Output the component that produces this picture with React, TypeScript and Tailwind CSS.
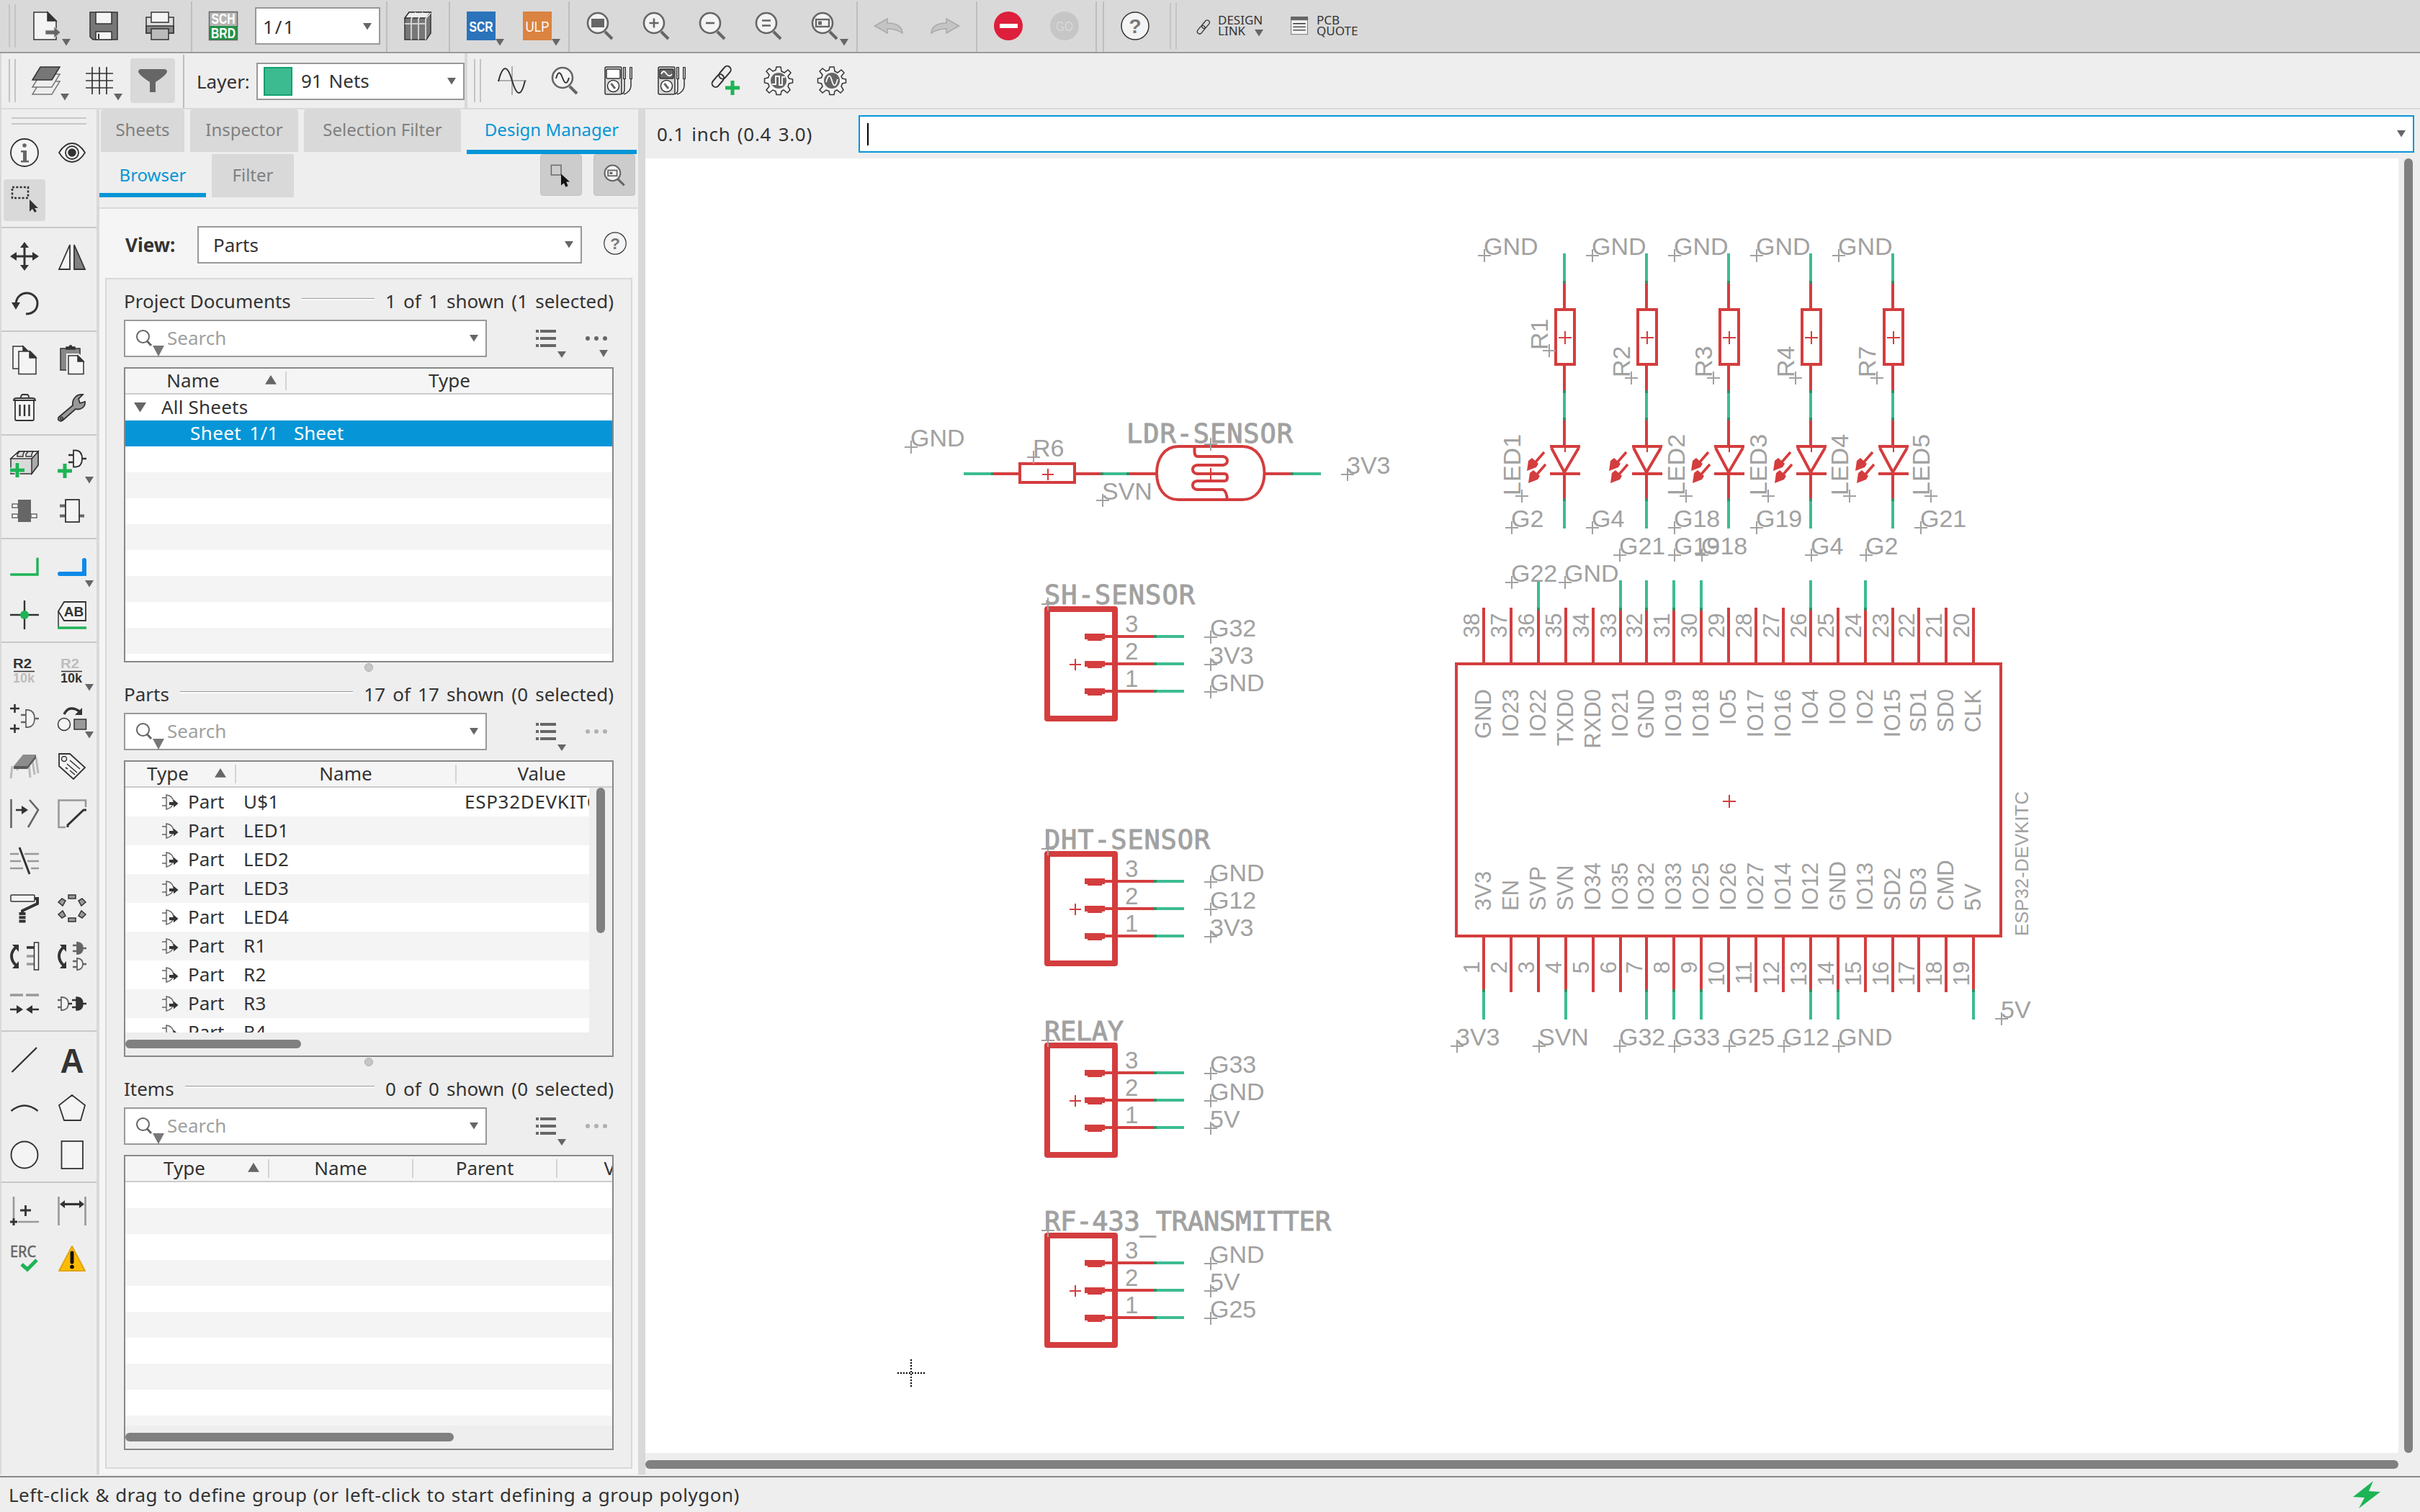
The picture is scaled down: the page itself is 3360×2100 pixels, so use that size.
import React, { ReactNode } from "react";

const DARK = "#333333";
const MID = "#666666";
const LIGHT = "#f4f4f4";
const GREEN = "#1db455";
const RED = "#d43d3e";
const NET = "#3dbc91";
const JOIN = "#338f66";
const GRAY = "#a1a1a1";

/* ---------- small building blocks ---------- */

function Tri({ className = "", size = 12, up = false }: { className?: string; size?: number; up?: boolean }) {
  return (
    <svg className={className} width={size} height={size * 0.8} viewBox="0 0 12 10" preserveAspectRatio="none">
      <path d={up ? "M0 10L6 0L12 10Z" : "M0 0H12L6 10Z"} fill={MID} />
    </svg>
  );
}

function Ico({ children, size = 40 }: { children: ReactNode; size?: number }) {
  return (
    <svg width={size} height={size} viewBox="0 0 40 40" fill="none" stroke={DARK} strokeWidth={1.5} className="shrink-0 overflow-visible">
      {children}
    </svg>
  );
}

function Handle({ className = "" }: { className?: string }) {
  return <div className={`w-[10px] border-x-2 border-[#c4c4c4] shrink-0 ${className}`} />;
}

function Sep({ className = "w-[10px]" }: { className?: string }) {
  return (
    <div className={`h-full flex justify-center shrink-0 pt-[2px] ${className}`}>
      <div className="w-[2px] h-full bg-[#bebebe]" />
    </div>
  );
}

function Cell({ children, menu }: { children: ReactNode; menu?: boolean }) {
  return (
    <div className="relative w-[78px] h-full flex items-center justify-center shrink-0">
      {children}
      {menu && <Tri className="absolute left-[59px] top-[54px]" />}
    </div>
  );
}

function Cell2({ children, menu, on }: { children: ReactNode; menu?: boolean; on?: boolean }) {
  return (
    <div className="relative w-[74px] h-full flex items-center justify-center shrink-0">
      <div className={`w-[62px] h-[62px] rounded-[4px] flex items-center justify-center ${on ? "bg-[#d9d9d9]" : ""}`}>{children}</div>
      {menu && <Tri className="absolute left-[57px] top-[56px]" />}
    </div>
  );
}

/* ---------- icons ---------- */

function Lens({ children }: { children?: ReactNode }) {
  return (
    <Ico>
      <path d="M26 28L36 38" stroke={MID} strokeWidth={4} />
      <circle cx={16} cy={16} r={14} fill={LIGHT} stroke={MID} strokeWidth={2.6} />
      {children}
    </Ico>
  );
}

const GEAR =
  "M17 1H23L24 7L28 9L33 5L37 9L33 14L34.500 17L39.500 18V23L34.500 24L33 28L36 33L32 37L27 33L24 34.500L23 39.500H17L16 34.500L12 33L7 37L3 33L7 28L5.500 24L0.500 23V17L5.500 16L7 12L3 7L7 3L12 7L16 5.500Z";

function Gear({ d }: { d: string }) {
  return (
    <Ico>
      <path d={GEAR} fill={LIGHT} />
      <circle cx={20} cy={20} r={11} fill={MID} stroke="none" />
      <path d={d} stroke="#fff" strokeWidth={1.8} />
    </Ico>
  );
}

function Meter({ dark }: { dark?: boolean }) {
  return (
    <Ico>
      <rect x={1} y={1} width={23} height={38} rx={2} fill="#d9d9d9" />
      <rect x={3} y={4} width={19} height={13} rx={1} fill={dark ? MID : "#fff"} />
      {dark && <path d="M5 11Q8 4 12 10T20 11" stroke="#fff" strokeWidth={1.8} />}
      <circle cx={12.500} cy={27.500} r={8} fill="#fff" />
      <path d="M9.500 24L15 31" strokeWidth={3} stroke={MID} />
      <path d="M28 18V32Q28 38 24 38.500M37 18V28Q36 36 27 39" strokeWidth={1.5} />
      <path d="M28 1V18M37 1V18" strokeWidth={4} />
      <path d="M28 2V17M37 2V17" strokeWidth={1.4} stroke="#ddd" />
    </Ico>
  );
}

function Chain({ plus }: { plus?: boolean }) {
  return (
    <>
      <g transform="rotate(-50 15 14)" strokeWidth={2}>
        <rect x={-3} y={9} width={20} height={10} rx={5} />
        <rect x={12} y={9} width={20} height={10} rx={5} />
      </g>
      {plus && <path d="M30 20V40M20 30H40" stroke={GREEN} strokeWidth={5} />}
    </>
  );
}

function Help({ size = 40 }: { size?: number }) {
  return (
    <Ico size={size}>
      <circle cx={20} cy={20} r={19} fill={LIGHT} />
      <text x={20} y={30} textAnchor="middle" fontSize={28} fontWeight={700} fontFamily="Liberation Sans, sans-serif" fill="#777" stroke="none">?</text>
    </Ico>
  );
}

function T({ x, y, s, children, fill = DARK, w = 700, anchor = "middle", len }: { x: number; y: number; s: number; children: ReactNode; fill?: string; w?: number; anchor?: "start" | "middle" | "end"; len?: number }) {
  return (
    <text x={x} y={y} fontSize={s} fontWeight={w} textAnchor={anchor} textLength={len} lengthAdjust="spacingAndGlyphs" fill={fill} stroke="none" fontFamily="Liberation Sans, sans-serif">
      {children}
    </text>
  );
}

function Undo({ flip }: { flip?: boolean }) {
  return (
    <Ico>
      <path transform={flip ? "translate(40 0) scale(-1 1)" : undefined} d="M0.500 20L18 10V16Q38 16 39 30Q30 24 18 24V30Z" fill="#c4c4c4" stroke="#a9a9a9" />
    </Ico>
  );
}

const ic: Record<string, ReactNode> = {
  info: (
    <Ico>
      <circle cx={20} cy={20} r={19} fill={LIGHT} strokeWidth={1.8} />
      <circle cx={20} cy={10} r={2.800} fill={MID} stroke="none" />
      <path d="M15 17H23V31H26V33.500H15V31H18V19.500H15Z" fill={MID} stroke="none" />
    </Ico>
  ),
  eye: (
    <Ico>
      <path d="M2 20Q10 7 20 7T38 20Q30 33 20 33T2 20Z" fill={LIGHT} strokeWidth={1.8} />
      <circle cx={20} cy={20} r={9} strokeWidth={1.800} />
      <circle cx={20} cy={20} r={5} fill={DARK} />
    </Ico>
  ),
  select: (
    <Ico>
      <rect x={3} y={2} width={22} height={15} strokeWidth={2.600} strokeDasharray="3 2.300" />
      <path d="M27 19V36L31 32L34 37L37 35.500L34 31H39Z" fill={DARK} stroke="none" />
    </Ico>
  ),
  move: (
    <Ico>
      <path d="M20 4V36M4 20H36" strokeWidth={3} />
      <path d="M20 0L26 8H14ZM20 40L26 32H14ZM0 20L9 14V26ZM40 20L31 14V26Z" fill={DARK} stroke="none" />
    </Ico>
  ),
  mirror: (
    <Ico>
      <path d="M17 4V38H2Z" fill={LIGHT} strokeWidth={1.8} />
      <path d="M23 4V38H38Z" fill="#808080" strokeWidth={1.8} />
    </Ico>
  ),
  rotate: (
    <Ico>
      <path d="M8 20C9 9 17 5 23 5C32 5 38 12 38 19C38 28 32 34 22 34" strokeWidth={3} />
      <path d="M2 18H14L8 28Z" fill={DARK} stroke="none" />
    </Ico>
  ),
  copy: (
    <Ico>
      <path d="M4 1H18L24 7V32H4Z" fill={LIGHT} />
      <path d="M18 1L24 7H18Z" fill={DARK} />
      <path d="M12 8H28L36 16V39.500H12Z" fill={LIGHT} />
      <path d="M27 8L36 17H27Z" fill={DARK} />
    </Ico>
  ),
  paste: (
    <Ico>
      <path d="M4 4H31V34H4Z" fill="#888" />
      <path d="M12 5V2H16L17 0H19L20 2H24V5Z" fill={DARK} />
      <path d="M14 13H29L37 21V39.500H14Z" fill={LIGHT} stroke="#eee" strokeWidth={4} />
      <path d="M15 14H28L36 22V39.500H15Z" fill={LIGHT} />
      <path d="M28 14L36 22H28Z" fill={DARK} />
    </Ico>
  ),
  trash: (
    <Ico>
      <path d="M7 11V36Q7 38 9 38H31Q33 38 33 36V11" fill={LIGHT} strokeWidth={1.800} />
      <path d="M5 10Q5 7 9 7H31Q35 7 35 10Z" fill={LIGHT} strokeWidth={1.800} />
      <path d="M15 6Q15 2 18 2H23Q26 2 26 6" strokeWidth={1.800} />
      <path d="M13.500 16V32M20 16V32M26.500 16V32" strokeWidth={2.400} />
    </Ico>
  ),
  wrench: (
    <Ico>
      <path d="M2 33L21 17C20 8 26 1 35 2L29 8L31 14L38 12C39 19 32 24 25 22L8 37C4 41 -2 37 2 33Z" fill="#999" strokeWidth={1.800} />
      <circle cx={5.500} cy={35} r={1.800} />
    </Ico>
  ),
  addpart: (
    <Ico>
      <path d="M1 13L12 3H39V22L30 34H1Z" fill="#d9d9d9" />
      <path d="M30 13L39 3V22L30 34Z" fill="#aaa" />
      <path d="M1 13L12 3H39L30 13Z" fill={LIGHT} />
      <path d="M10 7L13 3H20L18 7V10H10ZM22 7L25 3H32L30 7V10H22Z" fill="#ddd" />
      <path d="M10 18V40M0 29H20" stroke="#eee" strokeWidth={7} />
      <path d="M10 19V39M0 29H20" stroke={GREEN} strokeWidth={5} />
    </Ico>
  ),
  addgate: (
    <Ico>
      <path d="M15 8H22M15 18H22M33 13H40" strokeWidth={2.600} />
      <path d="M22 1.500H25Q34 2 34 13T25 24.500H22Z" fill={LIGHT} strokeWidth={1.800} />
      <path d="M10 20V40M0 30H20" stroke={GREEN} strokeWidth={5} />
    </Ico>
  ),
  chipdark: (
    <Ico>
      <path d="M3 10H11V15H3ZM3 24H11V29H3ZM29 24H37V29H29Z" stroke={MID} fill="#fff" />
      <rect x={11} y={4} width={18} height={31} fill={MID} stroke="none" />
    </Ico>
  ),
  chip: (
    <Ico>
      <path d="M3 12.500H11M3 26.500H11M29 26.500H37" stroke={MID} strokeWidth={4} />
      <rect x={11} y={4} width={19} height={31} fill={LIGHT} strokeWidth={1.800} />
    </Ico>
  ),
  net: (
    <Ico>
      <path d="M1.500 30H38V8" stroke={GREEN} strokeWidth={3.400} strokeLinecap="round" />
    </Ico>
  ),
  bus: (
    <Ico>
      <path d="M3 29H37V10" stroke="#0d8ae8" strokeWidth={6} strokeLinecap="round" />
    </Ico>
  ),
  junction: (
    <Ico>
      <path d="M20 0V40M0 20H40" strokeWidth={2.400} />
      <circle cx={20} cy={20} r={6} fill={GREEN} stroke="none" />
    </Ico>
  ),
  label: (
    <Ico>
      <path d="M1 15L9 2H39V28H9Z" fill={LIGHT} strokeWidth={1.800} />
      <path d="M1 15V38" />
      <path d="M0 38H40" stroke={GREEN} strokeWidth={3.400} />
      <T x={22.500} y={22} s={19}>AB</T>
    </Ico>
  ),
  r2a: (
    <Ico>
      <T x={4} y={16} s={18} anchor="start" len={26}>R2</T>
      <path d="M5 20.500H34" />
      <T x={4} y={36} s={18} anchor="start" len={30} fill="#bdbdbd">10k</T>
    </Ico>
  ),
  r2b: (
    <Ico>
      <T x={4} y={16} s={18} anchor="start" len={26} fill="#bdbdbd">R2</T>
      <path d="M5 20.500H34" />
      <T x={4} y={36} s={18} anchor="start" len={30}>10k</T>
    </Ico>
  ),
  invoke: (
    <Ico>
      <path d="M0 6H13M6.500 0V12M0 34H13M6.500 28V40" strokeWidth={2.600} />
      <path d="M15 15H22M15 25H22M33 20H40" stroke={MID} strokeWidth={2.600} />
      <path d="M22 8H25Q34 9 34 20T25 32H22Z" fill={LIGHT} stroke={MID} strokeWidth={1.800} />
    </Ico>
  ),
  replace: (
    <Ico>
      <circle cx={9} cy={28} r={8.500} fill={LIGHT} />
      <rect x={23} y={21} width={16.500} height={14} fill="#999" />
      <path d="M9 14Q13 6 19 6Q26 6 31 11" strokeWidth={3.500} />
      <path d="M34 5V15H24Z" fill={DARK} stroke="none" />
    </Ico>
  ),
  dip: (
    <Ico>
      <path d="M3 20L1 37M10 22V26M26 17L28 36M31 12L34 32M36 8L39 30" stroke="#bbb" strokeWidth={3} />
      <path d="M5 20L18 4H36L24 20Z" fill="#8c8c8c" stroke="none" />
      <path d="M5 20H24L36 4V9L24 24H5Z" fill="#5a5a5a" stroke="none" />
    </Ico>
  ),
  tag: (
    <Ico>
      <path d="M2 3H17L38 22L22 38L2 20Z" fill={LIGHT} strokeWidth={1.800} />
      <circle cx={9} cy={10} r={3.500} />
      <path d="M17 12L31 24M13 17L27 29M11 22L14 24M17 26L24 32" strokeWidth={1.600} />
    </Ico>
  ),
  split: (
    <Ico>
      <path d="M1.500 0V40M27 1L39 15L25 39" stroke={MID} strokeWidth={2.600} />
      <path d="M8 15H19" strokeWidth={2.600} />
      <path d="M16 9L25 15L16 21Z" fill={DARK} stroke="none" />
    </Ico>
  ),
  miter: (
    <Ico>
      <path d="M11 39H1.500V1.500H39V11" stroke="#999" strokeWidth={2.600} />
      <path d="M14 39V36L36 15H40" strokeWidth={3} />
    </Ico>
  ),
  cutlines: (
    <Ico>
      <path d="M0 10H12M0 20H15M0 30H18M20 10H40M24 20H40M29 30H40" stroke="#999" strokeWidth={2.600} />
      <path d="M13 1L27 38" strokeWidth={3} />
    </Ico>
  ),
  paint: (
    <Ico>
      <rect x={1} y={1} width={33} height={9} rx={1} fill={LIGHT} />
      <path d="M34 6H38V13L17 23V26" strokeWidth={4} />
      <path d="M17 25V40" strokeWidth={9} strokeDasharray="4 1.200" />
    </Ico>
  ),
  array: (
    <Ico>
      <g fill="#999">
        <rect x={15} y={1} width={10} height={5} />
        <rect x={15} y={33} width={10} height={5} />
        <path d="M1 11L6 6L11 9L7 16Z" />
        <path d="M39 11L34 6L29 9L33 16Z" />
        <path d="M1 28L6 33L11 30L7 23Z" />
        <path d="M39 28L34 33L29 30L33 23Z" />
      </g>
    </Ico>
  ),
  pinswap: (
    <Ico>
      <path d="M10 6Q2 12 2 20T10 34" strokeWidth={4} />
      <path d="M3 4H12V14ZM3 37H12V27Z" fill={DARK} stroke="none" />
      <path d="M23 8H33" strokeWidth={3.600} />
      <path d="M23 20H33M23 31H33" stroke="#999" strokeWidth={3.600} />
      <rect x={33.500} y={1} width={6} height={38} fill={LIGHT} />
    </Ico>
  ),
  gateswap: (
    <Ico>
      <path d="M10 6Q2 12 2 20T10 34" strokeWidth={4} />
      <path d="M3 4H12V14ZM3 37H12V27Z" fill={DARK} stroke="none" />
      <g stroke={MID} strokeWidth={1.800}>
        <path d="M21 5H27M21 13H27M34 9H40M21 27H27M21 35H27M34 31H40" strokeWidth={2.400} />
        <path d="M27 1H28Q35 2 35 9T28 17H27Z" fill={MID} />
        <path d="M27 23H28Q35 24 35 31T28 39H27Z" fill={LIGHT} />
      </g>
    </Ico>
  ),
  optimize: (
    <Ico>
      <path d="M0 8H18M22 8H40" stroke="#999" strokeWidth={3.400} />
      <path d="M0 28H12M28 28H40" strokeWidth={2.600} />
      <path d="M9 22L18 28L9 34ZM31 22L22 28L31 34Z" fill={DARK} stroke="none" />
    </Ico>
  ),
  gates: (
    <Ico>
      <path d="M0 15H5M0 25H5" stroke={MID} strokeWidth={2.400} />
      <path d="M5 11H7Q15 12 15 20T7 29H5Z" fill={LIGHT} stroke={MID} strokeWidth={1.800} />
      <path d="M15 20H20M20 15H26M20 25H26M34 20H40" strokeWidth={2.600} />
      <path d="M26 11H28Q35 12 35 20T28 29H26Z" fill={DARK} />
    </Ico>
  ),
  line: (
    <Ico>
      <path d="M2.500 37L37 3" strokeWidth={2.400} />
    </Ico>
  ),
  text: (
    <Ico>
      <T x={20} y={37.500} s={49} len={33}>A</T>
    </Ico>
  ),
  arc: (
    <Ico>
      <path d="M1.500 25Q20 10 38.500 25" strokeWidth={2.400} />
    </Ico>
  ),
  poly: (
    <Ico>
      <path d="M20 3L38 17L32 38H9L2 17Z" fill={LIGHT} strokeWidth={1.800} />
    </Ico>
  ),
  circle: (
    <Ico>
      <circle cx={20} cy={20} r={18.500} fill={LIGHT} strokeWidth={1.900} />
    </Ico>
  ),
  rect: (
    <Ico>
      <rect x={5.500} y={1} width={29.500} height={38} fill={LIGHT} strokeWidth={1.800} />
    </Ico>
  ),
  origin: (
    <Ico>
      <path d="M5 0V30M11 35H40" stroke="#999" strokeWidth={2.600} />
      <path d="M0 35H10M5 30V40" strokeWidth={3} />
      <path d="M14 19H29M21.500 12V27" strokeWidth={2.800} />
    </Ico>
  ),
  dim: (
    <Ico>
      <path d="M1.500 0V40M38.500 0V40" stroke="#999" strokeWidth={2.600} />
      <path d="M8 10.500H32" strokeWidth={3.200} />
      <path d="M3 10.500L10 5V16ZM37 10.500L30 5V16Z" fill={DARK} stroke="none" />
    </Ico>
  ),
  erc: (
    <Ico>
      <text x={0} y={18} fontSize={22} textLength={36} lengthAdjust="spacingAndGlyphs" fill={MID} stroke={MID} strokeWidth={0.600} fontFamily="Noto Sans, sans-serif">ERC</text>
      <path d="M16 28L24 35L37 22" stroke={GREEN} strokeWidth={5} />
    </Ico>
  ),
  warn: (
    <Ico>
      <path d="M20 3L38 37H2Z" fill="#fdbb05" stroke="#e0a613" strokeWidth={2} strokeLinejoin="round" />
      <path d="M20 12V25" stroke="#111" strokeWidth={5} strokeLinecap="round" />
      <circle cx={20} cy={31.500} r={2.800} fill="#111" stroke="none" />
    </Ico>
  ),
};

/* ---------- top toolbars ---------- */

function TopBar() {
  return (
    <div className="h-[74px] shrink-0 bg-[#d9d9d9] border-b-2 border-[#9a9a9a] flex items-center">
      <Handle className="ml-[12px] h-[60px] mr-[5px]" />
      <Cell menu>
        <Ico>
          <path d="M1 1H20L32 13V39H1Z" fill={LIGHT} />
          <path d="M20 1L32 13H20Z" fill={DARK} />
          <path d="M17 26H29V21L38 29L29 37V32H17Z" fill={MID} stroke="#d9d9d9" strokeWidth={1} />
        </Ico>
      </Cell>
      <Cell>
        <Ico>
          <path d="M1 1H39V39H5L1 35Z" fill="#777" />
          <rect x={9} y={1} width={22} height={16} fill={LIGHT} />
          <rect x={9} y={28} width={22} height={11} fill={LIGHT} />
          <path d="M13 31V38" strokeWidth={2} />
        </Ico>
      </Cell>
      <Cell>
        <Ico>
          <rect x={1} y={8} width={38} height={22} fill="#ddd" />
          <rect x={1} y={20} width={38} height={10} fill="#888" />
          <rect x={8} y={1} width={24} height={14} fill={LIGHT} />
          <rect x={8} y={24} width={24} height={15} fill="#bbb" />
        </Ico>
      </Cell>
      <Sep />
      <Cell>
        <Ico>
          <rect x={0.500} y={0.500} width={39} height={39} fill="#b5b5b5" stroke={MID} />
          <rect x={1} y={20} width={38} height={19} fill="#219247" stroke="none" />
          <T x={20} y={17} s={20} fill="#fff" len={33}>SCH</T>
          <T x={20} y={37} s={20} fill="#fff" len={34}>BRD</T>
        </Ico>
      </Cell>
      <div className="ml-[5px] w-[174px] h-[52px] border-2 border-[#999] bg-white flex items-center justify-between pl-[9px] pr-[10px] pt-[2px] text-[26px] tracking-[2px] text-[#333]">
        1/1
        <Tri />
      </div>
      <Sep className="w-[13px] pl-[4px]" />
      <Cell>
        <Ico>
          <path d="M2 10L8 1H38V30L32 39H2Z" fill="#777" />
          <path d="M2 9L8 1H38L32 9Z" fill="#eee" />
          <path d="M11 39V10L17 1M21 39V10L27 1M31 39V10L38 2M2 17H10M12 17H20M22 17H30" stroke="#eee" strokeWidth={1.500} />
        </Ico>
      </Cell>
      <Sep />
      <Cell menu>
        <Ico>
          <rect width={40} height={40} fill="#2b73bb" stroke="none" />
          <T x={20} y={27.500} s={21} fill="#fff" len={33}>SCR</T>
        </Ico>
      </Cell>
      <Cell menu>
        <Ico>
          <rect width={40} height={40} fill="#db8340" stroke="none" />
          <T x={20} y={27.500} s={21} fill="#fff" w={400} len={33}>ULP</T>
        </Ico>
      </Cell>
      <Sep />
      <Cell>
        <Lens>
          <rect x={7} y={10} width={18} height={12} fill={MID} stroke="none" />
        </Lens>
      </Cell>
      <Cell>
        <Lens>
          <path d="M9.500 16H22.500M16 9.500V22.500" stroke={MID} strokeWidth={2.600} />
        </Lens>
      </Cell>
      <Cell>
        <Lens>
          <path d="M10 16H22" stroke={MID} strokeWidth={2.600} />
        </Lens>
      </Cell>
      <Cell>
        <Lens>
          <path d="M10 12.500H22M10 19.500H22" stroke={MID} strokeWidth={2.600} />
        </Lens>
      </Cell>
      <Cell menu>
        <Lens>
          <rect x={7} y={11} width={18} height={10} stroke={MID} strokeWidth={2.400} />
          <rect x={10} y={13.500} width={5} height={5} fill={MID} stroke="none" />
        </Lens>
      </Cell>
      <Sep />
      <Cell>
        <Undo />
      </Cell>
      <Cell>
        <Undo flip />
      </Cell>
      <Sep />
      <Cell>
        <Ico>
          <circle cx={20} cy={20} r={20} fill="#de1f3b" stroke="none" />
          <path d="M8 20H33" stroke="#fff" strokeWidth={6} />
        </Ico>
      </Cell>
      <Cell>
        <Ico>
          <circle cx={20} cy={20} r={20} fill="#c6c6c6" stroke="none" />
          <T x={20} y={27} s={19} fill="#d9d9d9" w={400} len={24}>GO</T>
        </Ico>
      </Cell>
      <Sep />
      <Sep />
      <Cell>
        <Help />
      </Cell>
      <Handle className="ml-[9px] h-[64px]" />
      <div className="ml-[26px] flex items-center">
        <Ico size={26}>
          <g transform="translate(2 8)">
            <Chain />
          </g>
        </Ico>
        <div className="relative ml-[5px] -mt-[2px] text-[17px] leading-[15px] text-[#333] w-[101px]">
          DESIGN
          <br />
          LINK
          <Tri className="absolute left-[51px] top-[21px]" />
        </div>
        <Ico size={26}>
          <rect x={1} y={1} width={35} height={37} fill={LIGHT} stroke="#777" />
          <path d="M0 4H37" strokeWidth={8} stroke={MID} />
          <path d="M5 15H32M5 22H32M5 29H32" strokeWidth={2} />
        </Ico>
        <div className="ml-[10px] -mt-[2px] text-[17px] leading-[15px] text-[#333]">
          PCB
          <br />
          QUOTE
        </div>
      </div>
    </div>
  );
}

function SecondBar() {
  return (
    <div className="h-[78px] shrink-0 bg-[#eeeeee] border-b-2 border-l-2 border-[#d9d9d9] flex items-center">
      <Handle className="ml-[10px] h-[60px] mr-[5px]" />
      <Cell2 menu>
        <Ico>
          <path d="M12 21H39L28 39H1Z" stroke="#777" />
          <path d="M12 11H39L28 29H1Z" fill="#eee" stroke="#777" />
          <path d="M12 1H39L28 19H1Z" fill="#777" />
        </Ico>
      </Cell2>
      <Cell2 menu>
        <Ico>
          <path d="M10 1V39M20 1V39M30 1V39M1 10H39M1 20H39M1 30H39" strokeWidth={1.700} />
        </Ico>
      </Cell2>
      <Cell2 on>
        <Ico>
          <path d="M0 8Q0 4 4 4H36Q40 4 40 8Q38 13 24 22V36H16V22Q2 13 0 8Z" fill={MID} stroke="none" />
        </Ico>
      </Cell2>
      <Sep className="w-[12px]" />
      <div className="ml-[12px] w-[83px] pt-[2px] text-[26px] text-[#333]">Layer:</div>
      <div className="mt-[1px] w-[289px] h-[52px] border-2 border-[#999] bg-white flex items-center text-[26px] text-[#333] pl-[8px] pr-[10px]">
        <div className="w-[40px] h-[40px] bg-[#3dbb90] border-2 border-[#10a070]" />
        <div className="ml-[12px] flex-1 [word-spacing:2px]">91 Nets</div>
        <Tri />
      </div>
      <div className="w-[4px] h-full bg-[#d9d9d9]" />
      <Handle className="ml-[9px] h-[60px] mr-[6px]" />
      <Cell2>
        <Ico>
          <path d="M0 20H40M20 0V40" stroke="#999" />
          <path d="M1 21Q10 -14 20 20T38 20" strokeWidth={2} />
        </Ico>
      </Cell2>
      <Cell2>
        <Lens>
          <path d="M7 17Q11 2 16 16T25 16" strokeWidth={2} />
        </Lens>
      </Cell2>
      <Cell2>
        <Meter />
      </Cell2>
      <Cell2>
        <Meter dark />
      </Cell2>
      <Cell2>
        <Ico>
          <Chain plus />
        </Ico>
      </Cell2>
      <Cell2>
        <Gear d="M11 25H16V14H21V26H25V15H29" />
      </Cell2>
      <Cell2>
        <Gear d="M12 22Q16 6 20 20T28 18" />
      </Cell2>
    </div>
  );
}

/* ---------- left tool palette ---------- */

type Tool = { n: string; menu?: boolean; on?: boolean } | null;
const sections: Tool[][] = [
  [{ n: "info" }, { n: "eye" }, { n: "select", on: true }, null],
  [{ n: "move" }, { n: "mirror" }, { n: "rotate" }, null],
  [{ n: "copy" }, { n: "paste" }, { n: "trash" }, { n: "wrench" }],
  [{ n: "addpart" }, { n: "addgate", menu: true }, { n: "chipdark" }, { n: "chip" }],
  [{ n: "net" }, { n: "bus", menu: true }, { n: "junction" }, { n: "label" }],
  [
    { n: "r2a" }, { n: "r2b", menu: true }, { n: "invoke" }, { n: "replace", menu: true }, { n: "dip" }, { n: "tag" }, { n: "split" }, { n: "miter" },
    { n: "cutlines" }, null, { n: "paint" }, { n: "array" }, { n: "pinswap" }, { n: "gateswap" }, { n: "optimize" }, { n: "gates" },
  ],
  [{ n: "line" }, { n: "text" }, { n: "arc" }, { n: "poly" }, { n: "circle" }, { n: "rect" }],
  [{ n: "origin" }, { n: "dim" }, { n: "erc" }, { n: "warn" }],
];

function Palette() {
  return (
    <div className="w-[138px] shrink-0 bg-[#eeeeee] border-l-2 border-r-4 border-[#d9d9d9]">
      <div className="h-[21px] pt-[11px] pl-[14px]">
        <div className="w-[104px] h-[10px] border-y-2 border-[#c8c8c8]" />
      </div>
      {sections.map((tools, i) => (
        <div key={i} className={`grid grid-cols-[64px_68px] pt-[6px] pb-[4px] ${i < sections.length - 1 ? "border-b-2 border-[#c8c8c8]" : ""}`}>
          {tools.map((t, j) => (
            <div key={j} className="relative h-[66px] flex items-center justify-center">
              {t && <div className={`w-[58px] h-[58px] flex items-center justify-center rounded-[4px] ${t.on ? "bg-[#d9d9d9]" : ""}`}>{ic[t.n]}</div>}
              {t?.menu && <Tri className="absolute left-[52px] top-[51px]" />}
            </div>
          ))}
        </div>
      ))}
    </div>
  );
}

/* ---------- design manager panel ---------- */

function Tab({ children, className = "", active }: { children: ReactNode; className?: string; active?: boolean }) {
  return (
    <div
      className={`flex items-center justify-center text-[24px] shrink-0 ${active ? "text-[#0696d7] border-b-[6px] border-[#0696d7] pt-[3px]" : "text-[#808080] bg-[#d9d9d9] pb-[3px]"} ${className}`}
    >
      {children}
    </div>
  );
}

function SearchRow({ more }: { more?: boolean }) {
  return (
    <div className="h-[52px] flex items-center shrink-0">
      <div className="relative w-[504px] h-full bg-white border-2 border-[#999] flex items-center pl-[14px] pr-[10px]">
        <svg width={44} height={36} viewBox="0 0 44 36" fill="none" stroke={MID} strokeWidth={2}>
          <circle cx={10.500} cy={15.500} r={8.500} />
          <path d="M16.500 22L22 28" strokeWidth={3} />
        </svg>
        <div className="text-[26px] text-[#a0a0a0] flex-1 pb-[2px]">Search</div>
        <Tri />
        <div className="absolute left-[38px] top-[34px] w-4 h-[15px] bg-[#777] [clip-path:polygon(0_0,100%_0,50%_100%)]" />
      </div>
      <svg className="ml-[68px] overflow-visible" width={44} height={48} viewBox="0 0 44 48" fill={MID}>
        <path d="M0 12H4V16H0ZM6 12H28V16H6ZM0 22H4V26H0ZM6 22H28V26H6ZM0 32H4V36H0ZM6 32H28V36H6ZM30 42H42L36 51Z" />
      </svg>
      <svg className="ml-[25px] overflow-visible" width={36} height={48} viewBox="0 0 36 48" fill={more ? MID : "#b0b0b0"}>
        <circle cx={3} cy={24} r={3} />
        <circle cx={15} cy={24} r={3} />
        <circle cx={27} cy={24} r={3} />
        {more && <path d="M19 40H31L25 50Z" />}
      </svg>
    </div>
  );
}

function TitleRow({ title, count }: { title: string; count: string }) {
  return (
    <div className="h-[50px] shrink-0 flex items-center pb-[2px] text-[26px] text-[#333] whitespace-nowrap">
      <span>{title}</span>
      <span className="flex-1 h-[3px] border-t border-[#999] bg-white ml-[15px] mr-[15px] -mt-[6px]" />
      <span className="[word-spacing:3.4px]">{count}</span>
    </div>
  );
}

function Splitter() {
  return (
    <div className="h-[20px] shrink-0 flex justify-center pt-[1px] pr-0">
      <div className="w-[12px] h-[12px] rounded-full bg-[#c6c6c6] border border-[#adadad]" />
    </div>
  );
}

function Head({ cols }: { cols: { t: string; w: string; sort?: string }[] }) {
  return (
    <div className="h-[36px] shrink-0 bg-[#f5f5f5] border-b-2 border-[#cccccc] flex items-center overflow-hidden text-[26px] leading-[34px] text-[#333]">
      {cols.map((c, i) => (
        <div key={c.t} className={`relative h-[26px] flex items-center justify-center shrink-0 pb-[2px] ${c.w} ${i < cols.length - 1 ? "border-r-2 border-[#d4d4d4]" : ""}`}>
          {c.t}
          {c.sort && <Tri up size={16} className={`absolute top-[5px] ${c.sort}`} />}
        </div>
      ))}
    </div>
  );
}

function Stripes({ n, last }: { n: number; last: string }) {
  return (
    <>
      {Array.from({ length: n }, (_, i) => (
        <div key={i} className={`${i === n - 1 ? last : "h-[36px]"} shrink-0 ${i % 2 ? "bg-[#f4f4f4]" : "bg-white"}`} />
      ))}
    </>
  );
}

const parts = ["U$1", "LED1", "LED2", "LED3", "LED4", "R1", "R2", "R3", "R4"];

function Panel() {
  return (
    <div className="w-[748px] shrink-0 flex flex-col bg-[#eeeeee] text-[#333]">
      <div className="h-[62px] flex shrink-0">
        <Tab className="ml-[2px] w-[116px] h-[59px] rounded-t-[4px]">Sheets</Tab>
        <Tab className="ml-[8px] w-[150px] h-[59px] rounded-t-[4px]">Inspector</Tab>
        <Tab className="ml-[8px] w-[218px] h-[59px] rounded-t-[4px]">Selection Filter</Tab>
        <Tab active className="ml-[8px] w-[236px] h-[62px] pb-[3px]">Design Manager</Tab>
      </div>
      <div className="h-[74px] flex shrink-0">
        <Tab active className="w-[148px] h-[60px]">Browser</Tab>
        <Tab className="ml-[8px] w-[114px] h-[60px]">Filter</Tab>
        <div className="ml-auto mr-[16px] w-[58px] h-[58px] rounded-[4px] bg-[#cccccc] border border-[#c2c2c2] flex items-center justify-center">
          <Ico size={32}>
            <rect x={3} y={3} width={17} height={17} stroke={MID} strokeWidth={1.800} />
            <path d="M20 18V38L25 34L28 41L32 39L29 32H35Z" fill="#111" stroke="none" />
          </Ico>
        </div>
        <div className="mr-[4px] w-[58px] h-[58px] rounded-[4px] bg-[#cccccc] border border-[#c2c2c2] flex items-center justify-center">
          <Ico size={31}>
            <path d="M25 26L37 38" stroke={MID} strokeWidth={4} />
            <circle cx={16} cy={16} r={14} fill={LIGHT} stroke={MID} strokeWidth={2.600} />
            <rect x={8} y={11} width={16} height={10} stroke={MID} strokeWidth={2.400} />
            <rect x={11} y={14} width={5} height={4} fill={MID} stroke="none" />
          </Ico>
        </div>
      </div>
      <div className="flex-1 bg-[#f5f5f5] border-t-2 border-[#d9d9d9] px-[8px] pb-[8px] flex flex-col">
        <div className="h-[96px] flex items-center text-[26px] pt-[4px] shrink-0">
          <div className="ml-[28px] w-[100px] font-bold">View:</div>
          <div className="w-[534px] h-[52px] border-2 border-[#999] bg-white flex items-center justify-between pl-[20px] pr-[10px]">
            Parts
            <Tri />
          </div>
          <div className="ml-[30px] -mt-[4px]">
            <Help size={32} />
          </div>
        </div>
        <div className="flex-1 border-2 border-[#d9d9d9] bg-[#eeeeee] pl-[24px] pr-[24px] pt-[6px] flex flex-col">
          <TitleRow title="Project Documents" count="1 of 1 shown (1 selected)" />
          <SearchRow more />
          <div className="mt-[14px] h-[410px] shrink-0 border-2 border-[#888] bg-white flex flex-col overflow-hidden">
            <Head cols={[{ t: "Name", w: "w-[224px] pr-[34px]", sort: "left-[194px]" }, { t: "Type", w: "w-[452px]" }]} />
            <div className="h-[36px] shrink-0 flex items-center text-[26px] pb-[1px]">
              <Tri size={17} className="ml-[12px]" />
              <span className="ml-[21px] tracking-[0.2px]">All Sheets</span>
            </div>
            <div className="h-[36px] shrink-0 flex items-center text-[26px] text-white bg-[#0696d7] pl-[90px] pb-[1px]">
              <span className="w-[144px] tracking-[0.4px] [word-spacing:4px]">Sheet 1/1</span>
              <span>Sheet</span>
            </div>
            <Stripes n={9} last="h-[10px]" />
          </div>
          <Splitter />
          <TitleRow title="Parts" count="17 of 17 shown (0 selected)" />
          <SearchRow />
          <div className="mt-[14px] h-[412px] shrink-0 border-2 border-[#888] bg-[#eeeeee] flex flex-col overflow-hidden">
            <Head
              cols={[
                { t: "Type", w: "w-[154px] pr-[34px]", sort: "left-[124px]" },
                { t: "Name", w: "w-[306px]" },
                { t: "Value", w: "w-[236px]" },
              ]}
            />
            <div className="h-[340px] flex shrink-0">
              <div className="w-[644px] h-full overflow-hidden">
                {parts.map((p, i) => (
                  <div key={p} className={`h-[40px] flex items-center text-[26px] pl-[51px] overflow-hidden ${i % 2 ? "bg-[#f4f4f4]" : "bg-white"}`}>
                    <svg className="shrink-0" width={24} height={24} viewBox="0 0 24 24" fill="none" stroke={MID} strokeWidth={1.500}>
                      <path d="M0 6H6M0 17H6" />
                      <path d="M6 2Q15 3 16 11.500Q15 20 6 22Z" fill={LIGHT} />
                      <path d="M10 12H16V8.500L22.500 14L16 19.500V16H10Z" fill={DARK} stroke="none" />
                    </svg>
                    <span className="ml-[12px] w-[77px] shrink-0 pb-[2px]">Part</span>
                    <span className="w-[307px] shrink-0 pb-[2px] tracking-[0.3px]">{p}</span>
                    <span className="whitespace-nowrap pb-[2px] tracking-[0.7px]">{i === 0 ? "ESP32DEVKITC" : ""}</span>
                  </div>
                ))}
              </div>
              <div className="ml-[10px] w-[12px] h-[202px] rounded-full bg-[#808080]" />
            </div>
            <div className="mt-[10px] w-[244px] h-[12px] rounded-full bg-[#808080] shrink-0" />
          </div>
          <Splitter />
          <TitleRow title="Items" count="0 of 0 shown (0 selected)" />
          <SearchRow />
          <div className="mt-[14px] h-[410px] shrink-0 border-2 border-[#888] bg-[#eeeeee] flex flex-col overflow-hidden">
            <Head
              cols={[
                { t: "Type", w: "w-[200px] pr-[34px]", sort: "left-[170px]" },
                { t: "Name", w: "w-[200px]" },
                { t: "Parent", w: "w-[200px]" },
                { t: "Value", w: "w-[196px]" },
              ]}
            />
            <Stripes n={10} last="h-[14px]" />
            <div className="mt-[10px] w-[456px] h-[12px] rounded-full bg-[#808080] shrink-0" />
          </div>
        </div>
      </div>
    </div>
  );
}

/* ---------- schematic ---------- */

function Cross({ x, y, c = GRAY, r = 9 }: { x: number; y: number; c?: string; r?: number }) {
  return <path d={`M${x - r} ${y}H${x + r}M${x} ${y - r}V${y + r}`} stroke={c} strokeWidth={2} />;
}

function Label({ x, y, t, rot, size = 34 }: { x: number; y: number; t: string; rot?: boolean; size?: number }) {
  return (
    <>
      <Cross x={x} y={y} />
      <text
        transform={rot ? `translate(${x - 2} ${y - 1}) rotate(-90)` : `translate(${x - 1} ${y - 1})`}
        fontSize={size}
        fill={GRAY}
      >
        {t}
      </text>
    </>
  );
}

function Wire({ d, c }: { d: string; c: string }) {
  return <path d={d} stroke={c} strokeWidth={4} fill="none" />;
}

function PartName({ x, y, len, children }: { x: number; y: number; len: number; children: string }) {
  return (
    <text x={x} y={y} fontSize={37} fontFamily="DejaVu Sans Mono, monospace" fill={GRAY} stroke={GRAY} strokeWidth={1} textLength={len} lengthAdjust="spacing">
      {children}
    </text>
  );
}

function Connector({ dy, name, len, nets }: { dy: number; name: string; len: number; nets: string[] }) {
  return (
    <g transform={`translate(0 ${dy})`}>
      <PartName x={1450} y={839} len={len}>
        {name}
      </PartName>
      <rect x={1454} y={846} width={94} height={152} stroke={RED} strokeWidth={8} strokeLinejoin="round" fill="none" />
      <Cross x={1455} y={839} />
      <Cross x={1493} y={923} c={RED} r={8} />
      {nets.map((n, i) => (
        <g key={i} transform={`translate(0 ${i * 38})`}>
          <path d="M1506 880H1534V888H1530V890H1510V888H1506Z" fill={RED} />
          <Wire d="M1534 884H1606" c={RED} />
          <Wire d="M1602 884H1644" c={NET} />
          <Wire d="M1602 884H1606" c={JOIN} />
          <text x={1562} y={878} fontSize={33} fill={GRAY}>
            {3 - i}
          </text>
          <Label x={1681} y={885} t={n} />
        </g>
      ))}
    </g>
  );
}

function Led({ x }: { x: number }) {
  return (
    <g transform={`translate(${x} 0)`}>
      <Wire d="M0 352V394M0 542V584M0 692V734" c={NET} />
      <Wire d="M0 394V428M0 508V542M0 584V618M0 660V692" c={RED} />
      <Wire d="M0 390V394M0 542V546M0 580V584M0 692V696" c={JOIN} />
      <rect x={-12} y={430} width={26} height={76} stroke={RED} strokeWidth={4} fill="none" />
      <Cross x={1} y={469} c={RED} />
      <Wire d="M-20 620H22M-20 658H22M-18 622L0 656L20 622" c={RED} />
      <path d="M1 622V628" stroke={RED} strokeWidth={2} />
      {[[0, 0], [2, 17]].map(([dx, dy]) => (
        <g key={dx} transform={`translate(${dx} ${dy})`}>
          <path d="M-28 628L-42 644" stroke={RED} strokeWidth={3.500} />
          <path d="M-52 654L-50 640L-45 636L-36 644L-39 649Z" fill={RED} />
        </g>
      ))}
    </g>
  );
}

const topPins = ["GND", "IO23", "IO22", "TXD0", "RXD0", "IO21", "GND", "IO19", "IO18", "IO5", "IO17", "IO16", "IO4", "IO0", "IO2", "IO15", "SD1", "SD0", "CLK"];
const bottomPins = ["3V3", "EN", "SVP", "SVN", "IO34", "IO35", "IO32", "IO33", "IO25", "IO26", "IO27", "IO14", "IO12", "GND", "IO13", "SD2", "SD3", "CMD", "5V"];
const topNets = [36, 33, 32, 31, 30, 26, 24];
const bottomNets = [1, 4, 7, 8, 9, 13, 14, 19];

function VText({ x, y, t, size, anchor = "start", len }: { x: number; y: number; t: string | number; size: number; anchor?: "start" | "end"; len?: number }) {
  return (
    <text transform={`translate(${x} ${y}) rotate(-90)`} fontSize={size} textAnchor={anchor} textLength={len} fill={GRAY}>
      {t}
    </text>
  );
}

function Module() {
  return (
    <>
      <rect x={2022} y={922} width={756} height={378} stroke={RED} strokeWidth={4} fill="none" />
      <Cross x={2401} y={1113} c={RED} />
      {topPins.map((t, i) => {
        const x = 2 * Math.round((2060 + i * 37.8) / 2);
        const hasTop = topNets.includes(38 - i);
        const hasBottom = bottomNets.includes(i + 1);
        return (
          <g key={i}>
            <Wire d={`M${x} 844V920M${x} 1302V1378`} c={RED} />
            {hasTop && <Wire d={`M${x} 806V844`} c={NET} />}
            {hasTop && <Wire d={`M${x} 844V848`} c={JOIN} />}
            {hasBottom && <Wire d={`M${x} 1378V1416`} c={NET} />}
            {hasBottom && <Wire d={`M${x} 1374V1378`} c={JOIN} />}
            <VText x={x - 6} y={886} t={38 - i} size={31} />
            <VText x={x - 6} y={1335} t={i + 1} size={31} anchor="end" />
            <VText x={x + 10} y={957} t={t} size={31} anchor="end" />
            <VText x={x + 10} y={1265} t={bottomPins[i]} size={31} />
          </g>
        );
      })}
      <VText x={2816} y={1300} t="ESP32-DEVKITC" size={25.500} len={201} />
    </>
  );
}

const netLabels: [string, number, number][] = [
  ["GND", 1265, 621], ["R6", 1435, 635], ["SVN", 1531, 695], ["3V3", 1871, 659],
  ["GND", 2061, 355], ["GND", 2211, 355], ["GND", 2325, 355], ["GND", 2439, 355], ["GND", 2553, 355],
  ["G2", 2099, 733], ["G4", 2211, 733], ["G18", 2325, 733], ["G19", 2439, 733], ["G21", 2667, 733],
  ["G21", 2249, 771], ["G19", 2325, 771], ["G18", 2363, 771], ["G4", 2515, 771], ["G2", 2591, 771],
  ["G22", 2099, 809], ["GND", 2173, 809],
  ["3V3", 2023, 1453], ["SVN", 2137, 1453], ["G32", 2249, 1453], ["G33", 2325, 1453], ["G25", 2401, 1453], ["G12", 2477, 1453], ["GND", 2553, 1453], ["5V", 2779, 1415],
];
const vertLabels: [string, number, number][] = [
  ["R1", 2151, 487], ["R2", 2265, 525], ["R3", 2379, 525], ["R4", 2493, 525], ["R7", 2606, 525],
  ["LED1", 2113, 689], ["LED2", 2341, 689], ["LED3", 2455, 689], ["LED4", 2568, 689], ["LED5", 2681, 689],
];

function Schematic() {
  return (
    <svg width={2434} height={1800} viewBox="896 220 2434 1800" fontFamily="Liberation Sans, Arial, sans-serif" className="block">
      <Wire d="M1338 658H1380M1528 658H1568M1792 658H1834" c={NET} />
      <Wire d="M1380 658H1414M1494 658H1528M1568 658H1605M1757 658H1792" c={RED} />
      <Wire d="M1376 658H1380M1528 658H1532M1564 658H1568M1792 658H1796" c={JOIN} />
      <rect x={1416} y={644} width={76} height={26} stroke={RED} strokeWidth={4} fill="none" />
      <Cross x={1455} y={659} c={RED} r={8} />
      <PartName x={1564} y={615} len={231}>
        LDR-SENSOR
      </PartName>
      <Wire d="M1636 620H1725C1745 620 1755.500 638 1755.500 657C1755.500 678 1744 694 1725 694H1636C1617 694 1606 678 1606 657C1606 638 1616 620 1636 620Z" c={RED} />
      <Wire d="M1658.500 620V628Q1659 634 1663 634H1698Q1704 635 1704 640T1698 646H1662Q1656 647 1656 652T1662 658H1700Q1704 658 1704 663T1700 668H1662Q1656 669 1656 674T1662 680H1698Q1703 682 1704 694" c={RED} />
      <Cross x={1681} y={617} />
      <Cross x={1681} y={659} c={RED} />
      {[2172, 2286, 2400, 2514, 2628].map((x) => (
        <Led key={x} x={x} />
      ))}
      <Module />
      {netLabels.map(([t, x, y], i) => (
        <Label key={i} x={x} y={y} t={t} />
      ))}
      {vertLabels.map(([t, x, y]) => (
        <Label key={t} x={x} y={y} t={t} rot />
      ))}
      <Connector dy={0} name="SH-SENSOR" len={209} nets={["G32", "3V3", "GND"]} />
      <Connector dy={340} name="DHT-SENSOR" len={230} nets={["GND", "G12", "3V3"]} />
      <Connector dy={606} name="RELAY" len={110} nets={["G33", "GND", "5V"]} />
      <Connector dy={870} name="RF-433_TRANSMITTER" len={398} nets={["GND", "5V", "G25"]} />
      <path d="M1246 1907H1284M1265 1888V1926" stroke="#000" strokeWidth={2} strokeDasharray="2 2" />
    </svg>
  );
}

function Workspace() {
  return (
    <div className="flex-1 flex flex-col bg-[#eeeeee]">
      <div className="h-[68px] shrink-0 flex items-center pl-[16px] pr-[8px]">
        <div className="w-[280px] text-[26px] tracking-[0.7px] [word-spacing:2px] text-[#333]">0.1 inch (0.4 3.0)</div>
        <div className="flex-1 h-[52px] bg-white border-2 border-[#0696d7] flex items-center justify-between pl-[10px] pr-[10px]">
          <div className="w-[2px] h-[31px] bg-black" />
          <Tri />
        </div>
      </div>
      <div className="h-[1798px] flex shrink-0">
        <div className="w-[2434px] h-full bg-white overflow-hidden">
          <Schematic />
        </div>
        <div className="ml-[8px] w-[12px] h-full rounded-full bg-[#808080]" />
      </div>
      <div className="mt-[10px] w-[2434px] h-[12px] rounded-full bg-[#808080]" />
    </div>
  );
}

export default function App() {
  return (
    <div className="w-[3360px] h-[2100px] flex flex-col overflow-hidden bg-[#eeeeee] font-['Noto_Sans',sans-serif]">
      <TopBar />
      <SecondBar />
      <div className="h-[1896px] flex shrink-0">
        <Palette />
        <Panel />
        <div className="w-[10px] bg-[#d9d9d9] shrink-0" />
        <Workspace />
      </div>
      <div className="flex-1 mt-[2px] border-t-2 border-[#888] flex items-center justify-between pl-[12px] pr-[54px] text-[26px] text-[#333]">
        <span className="whitespace-nowrap tracking-[0.5px] [word-spacing:1px]">Left-click &amp; drag to define group (or left-click to start defining a group polygon)</span>
        <svg width={40} height={40} viewBox="0 0 40 40">
          <path d="M29 1L1 23L17 24L9 39L39 16L23 15Z" fill={GREEN} />
        </svg>
      </div>
    </div>
  );
}
